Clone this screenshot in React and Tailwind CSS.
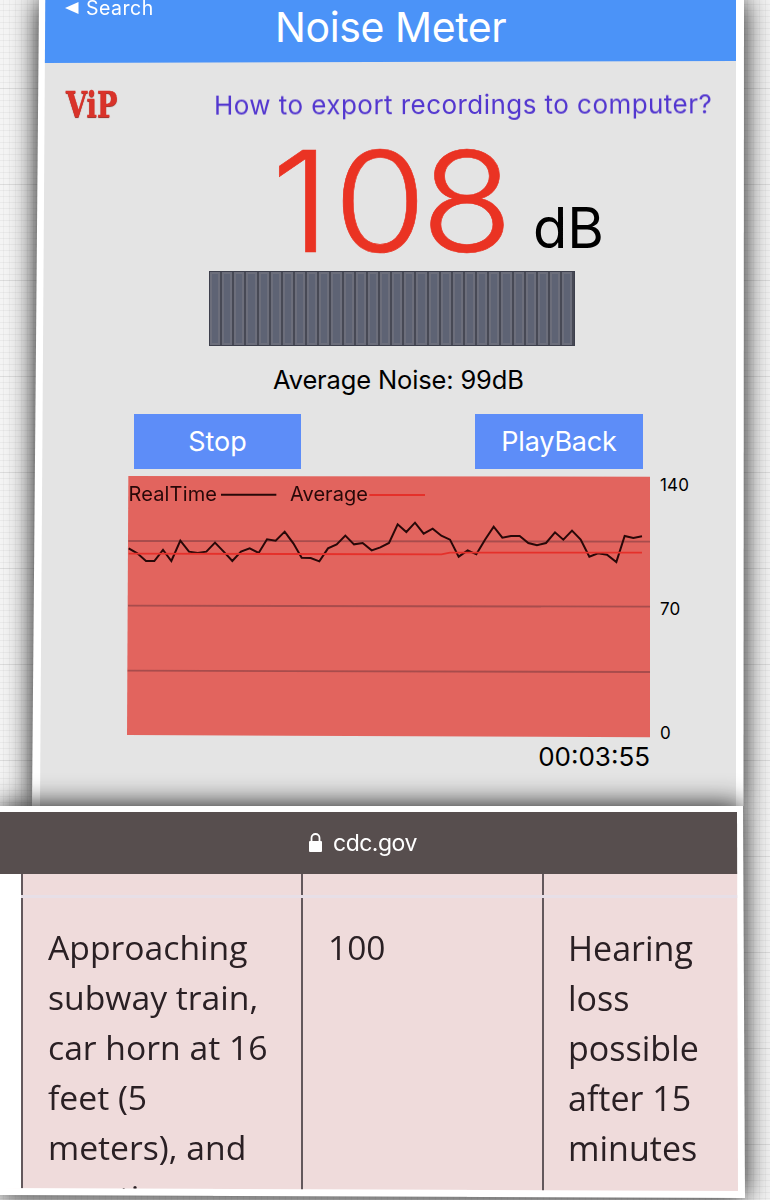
const REALTIME =
  '26,235 52,250 78,273 103,273 129,240 154,273 181,212 207,245 233,249 259,245 285,218 311,245 337,273 363,245 389,235 416,249 441,208 467,212 494,185 520,220 545,263 572,264 598,274 624,235 650,223 676,197 702,223 728,219 755,241 781,232 807,219 833,163 859,186 885,158 911,191 938,176 964,197 990,209 1016,260 1043,241 1069,253 1095,209 1121,170 1147,203 1173,198 1199,198 1225,219 1251,226 1278,219 1305,187 1330,209 1356,182 1382,209 1408,260 1434,250 1461,254 1489,276 1514,198 1540,204 1566,199';

function LevelBars() {
  return (
    <div className="ml-[169px] mt-[15px] flex h-[75px] w-[366px] bg-[#3d3f4c] p-[1px]">
      {Array.from({ length: 30 }, (_, i) => (
        <div key={i} className="min-w-0 flex-1 border-r-2 border-[#474955]">
          <div className="h-full border-2 border-[#6c6e7b] bg-[#5e6374]" />
        </div>
      ))}
    </div>
  );
}

function Chart() {
  return (
    <div className="mt-[7px] flex">
      <div className="relative ml-[87px] h-[262px] w-[523px]">
        <svg className="block" width="523" height="262" viewBox="21 18 1569 786">
          <polygon points="25,18 1590,20 1590,802 21,795" fill="#e2645e" />
          <g stroke="#a84c4c" strokeWidth="5.5">
            <line x1="25" y1="213" x2="1590" y2="215" />
            <line x1="24" y1="407" x2="1590" y2="410" />
            <line x1="23" y1="602" x2="1590" y2="606" />
          </g>
          <polyline points={REALTIME} fill="none" stroke="#280808" strokeWidth="6" />
          <path d="M26 251L964 253L990 248H1566" fill="none" stroke="#e5302a" strokeWidth="5.5" />
          <line x1="303" y1="74" x2="469" y2="74" stroke="#280808" strokeWidth="6" />
          <line x1="748" y1="75" x2="915" y2="75" stroke="#e5302a" strokeWidth="5.5" />
        </svg>
        <span className="absolute left-[1.500px] top-[8px] text-[20px] leading-[20px] tracking-[0.15px] text-[#280808]">RealTime</span>
        <span className="absolute left-[163px] top-[8px] text-[20px] leading-[20px] tracking-[0.05px] text-[#280808]">Average</span>
      </div>
      <div className="ml-[10px] flex h-[267px] flex-col justify-between text-[17px] leading-[20px] tracking-[0.2px]">
        <span className="-mt-[1px]">140</span>
        <span>70</span>
        <span>0</span>
      </div>
    </div>
  );
}

function MeterCard() {
  return (
    <div className="ml-[32px] w-[713px] shrink-0 drop-shadow-[0_0_14px_rgba(0,0,0,0.95)]">
      <div className="h-[806px] bg-white pl-[8px] [clip-path:polygon(7px_0,712px_0,711.5px_100%,0_100%)]">
        <div className="h-full w-[696px] bg-[#e4e4e4] [clip-path:polygon(5.3px_0,100%_0,100%_100%,0_100%)]">
          <header className="relative h-[63px] bg-[#4b93f8] text-white [clip-path:polygon(0_0,100%_0,100%_61px,0_100%)]">
            <div className="absolute left-[25px] top-0 flex items-center">
              <svg width="14" height="12" viewBox="0 0 14 12">
                <path d="M0 6L13.500 0V12Z" fill="white" />
              </svg>
              <span className="ml-[7px] text-[19.500px] leading-[16px] tracking-[0.5px]">Search</span>
            </div>
            <h1 className="pl-[235px] pt-[7px] text-[41px] leading-[41px] tracking-[-0.4px]">Noise Meter</h1>
          </header>
          <div className="flex h-[83px] items-center pl-[26px]">
            <span className="mt-[-2px] w-[148px] origin-left scale-x-[0.84] font-['DejaVu_Serif_Condensed','DejaVu_Serif',serif] text-[36px] font-bold leading-[40px] text-[#d9332a] [font-stretch:condensed] [-webkit-text-stroke:0.5px_#d9332a] [text-shadow:0_1px_1px_#8b2a22]">ViP</span>
            <a className="-rotate-[0.15deg] whitespace-nowrap text-[26px] leading-[32px] tracking-[0.45px] text-[#5236cf]">How to export recordings to computer?</a>
          </div>
          <div className="flex h-[110px] items-center pl-[231px]">
            <span className="w-[262px] origin-left scale-x-[1.075] text-[140px] font-light leading-[110px] text-[#ea3323] [-webkit-text-stroke:0.6px_#ea3323]">
              <span className="tracking-[3px]">1</span>
              <span className="tracking-[-5px]">08</span>
            </span>
            <span className="pt-[54px] text-[56px] leading-[56px]">dB</span>
          </div>
          <LevelBars />
          <p className="ml-[233px] mt-[19px] text-[25.500px] leading-[30px] tracking-[-0.15px]">Average Noise: 99dB</p>
          <div className="mt-[19px] flex pl-[94px] text-[27px] text-white">
            <button className="h-[55px] w-[167px] bg-[#5d8df8] pt-[2px]">Stop</button>
            <button className="ml-[174px] h-[55px] w-[168px] bg-[#5d8df8] pt-[2px] tracking-[-0.2px]">PlayBack</button>
          </div>
          <Chart />
          <p className="-mt-px pr-[86px] text-right text-[26px] leading-[30px]">00:03:55</p>
        </div>
      </div>
    </div>
  );
}

function BrowserCard() {
  return (
    <div className="relative w-[745px] shrink-0 drop-shadow-[0_0_14px_rgba(0,0,0,0.95)]">
      <div className="h-[392px] bg-white pt-[6px] [clip-path:polygon(0_0,743px_0,100%_100%,0_389px)]">
        <div className="h-[379px] w-[738px] overflow-hidden [clip-path:polygon(0_0,737px_0,100%_100%,0_376px)]">
          <div className="flex h-[62px] items-center bg-[#574e4e] pl-[309px] text-white">
            <svg className="-mt-[2px]" width="13" height="19" viewBox="0 0 13 19">
              <path d="M2.500 9V5a4 4 0 0 1 8 0v4" fill="none" stroke="white" strokeWidth="1.800" />
              <rect y="8" width="13" height="11" rx="1" fill="white" />
            </svg>
            <span className="ml-[11px] text-[23px] leading-[30px] tracking-[-0.500px]">cdc.gov</span>
          </div>
          <div className="relative flex h-[317px] bg-[#efdbdb] font-['Open_Sans',sans-serif] text-[34px] leading-[50px] text-[#2a2024]">
            <div className="w-[21px] bg-white" />
            <div className="w-[280px] border-l-2 border-[#63585c] pl-[25px] pt-[48px] text-[33.700px]">
              Approaching<br />subway train,<br />car horn at 16<br />feet (5<br />meters), and<br />sporting
            </div>
            <div className="w-[241px] border-l-2 border-[#63585c] pl-[25px] pt-[48px] text-[33.500px]">100</div>
            <div className="w-[196px] border-l-2 border-[#63585c] pl-[24px] pt-[49px]">
              Hearing<br />loss<br />possible<br />after 15<br />minutes
            </div>
            <div className="absolute left-[21px] right-0 top-[21px] h-[3px] bg-[#e7dfe7]" />
          </div>
        </div>
      </div>
    </div>
  );
}

export default function App() {
  return (
    <main className="flex h-[1200px] w-[770px] flex-col overflow-hidden bg-[#f4f4f4] bg-[linear-gradient(#0000000a_1px,transparent_1px),linear-gradient(90deg,#00000008_1px,transparent_1px),linear-gradient(#0000000f_1px,transparent_1px)] bg-[length:6px_6px,6px_6px,96px_96px] bg-[position:0_4px,3px_0,0_88px] font-['Inter',sans-serif] text-black">
      <MeterCard />
      <BrowserCard />
    </main>
  );
}
